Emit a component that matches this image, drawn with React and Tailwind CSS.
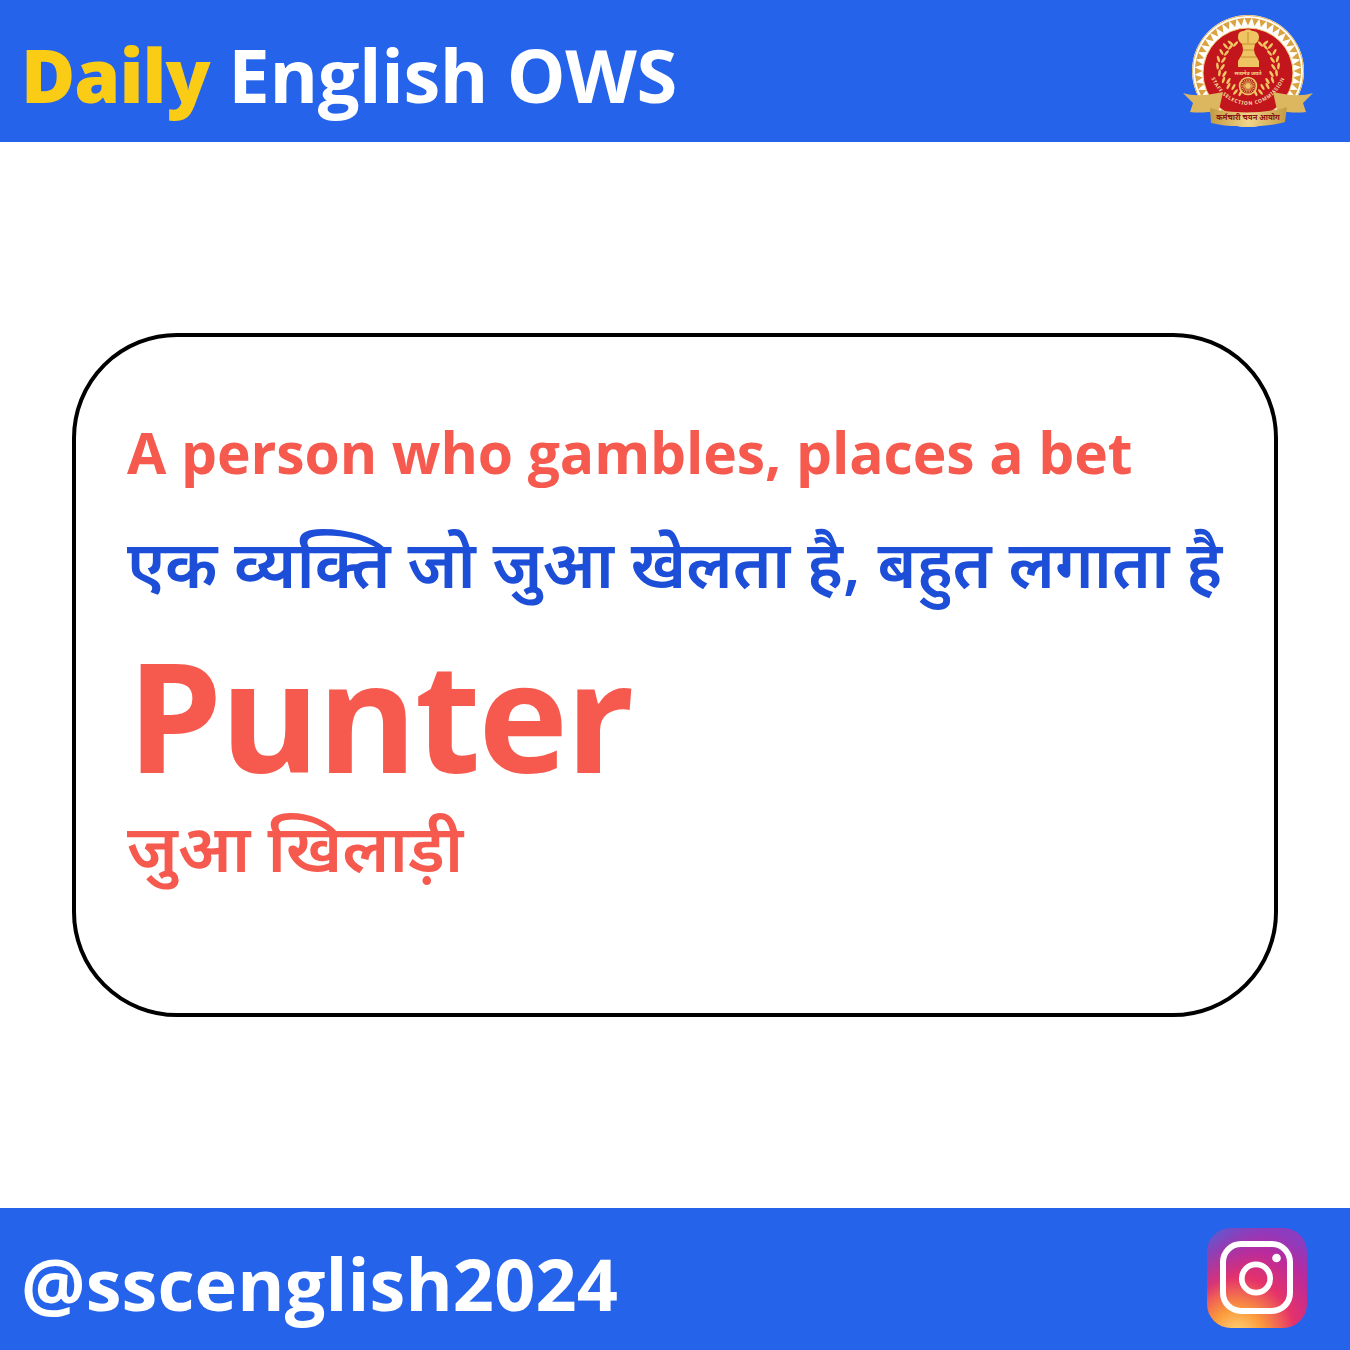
import React from 'react';

const rays = Array.from({ length: 44 }, (_, i) => (i * 360) / 44);
const leaves = [0, 1, 2, 3, 4, 5, 6, 7, 8];
// wreath spine, left side; the right side is mirrored round x=67
const spine = [[52, 30], [47, 33], [43, 39], [40, 46], [39, 53], [41, 60], [45, 67], [50, 73], [57, 79]];

const Wreath = () => (
    <g>
        {leaves.map((i) => {
            const [x, y] = spine[i];
            return (
                <g key={i}>
                    <ellipse cx={x - 2.5} cy={y} rx="1.3" ry="3.4" fill="#f0c765" transform={`rotate(${-50 + i * 11} ${x - 2.5} ${y})`} />
                    <ellipse cx={x + 2.5} cy={y + 1} rx="1.3" ry="3.4" fill="#f0c765" transform={`rotate(${42 - i * 2} ${x + 2.5} ${y + 1})`} />
                </g>
            );
        })}
    </g>
);

const SscLogo = () => (
    <svg width="134" height="116" viewBox="0 0 134 116">
        <defs>
            <linearGradient id="gold" x1="0" x2="1" y1="0" y2="0">
                <stop offset="0" stopColor="#c39a42" />
                <stop offset="0.5" stopColor="#f0d58a" />
                <stop offset="1" stopColor="#c39a42" />
            </linearGradient>
            <path id="arc" d="M 26 48 C 29 78, 50 92, 67 92 C 84 92, 105 78, 108 48" fill="none" />
        </defs>
        <circle cx="67" cy="58" r="56" fill="#fff" />
        <circle cx="67" cy="58" r="55.5" fill="none" stroke="#e2b55c" strokeWidth="1" />
        {rays.map((a) => (
            <path key={a} d="M 63.4 5 L 70.6 5 L 67 12.5 Z" fill="#d9a441" transform={`rotate(${a} 67 58)`} />
        ))}
        <circle cx="67" cy="60" r="45" fill="#c3161c" stroke="#f0d080" strokeWidth="1" />
        {/* national emblem */}
        <path d="M63 18 C65 16 69 16 71 18 C75 18 78 20 78 24 C78 28 76 29 74 31 L73 36 C73 39 74 41 75 43 L78 48 V54 H57 V48 L60 43 C61 41 62 39 62 36 L61 31 C59 29 57 28 57 24 C57 20 59 18 63 18 Z" fill="#efc462" />
        <path d="M61 31 H74 M62 37 H73 M60 44 H75 M67 19 V30" stroke="#c68f2e" strokeWidth="1" />
        <text x="67" y="62" textAnchor="middle" fontSize="5.2" fontWeight="700" fill="#f3d98a" fontFamily="'Noto Sans', sans-serif">सत्यमेव जयते</text>
        <Wreath />
        <g transform="matrix(-1 0 0 1 134 0)">
            <Wreath />
        </g>
        {/* ashoka chakra */}
        <circle cx="67" cy="73" r="8.5" fill="#a9151a" stroke="#f0c765" strokeWidth="1.6" />
        <circle cx="67" cy="73" r="2.4" fill="#f0c765" />
        {rays.filter((_, i) => i % 4 === 0).map((a) => (
            <path key={a} d="M67 65 V81" stroke="#f0c765" strokeWidth="0.7" transform={`rotate(${a} 67 73)`} />
        ))}
        <text fontSize="5" fontWeight="700" fill="#f6dfa0" letterSpacing="0.7" fontFamily="'Noto Sans', sans-serif">
            <textPath href="#arc" startOffset="50%" textAnchor="middle">STAFF SELECTION COMMISSION</textPath>
        </text>
        {/* ribbon */}
        <path d="M2 80 C14 84 28 82 42 79 L38 97 C26 100 16 100 9 99 L12 90 Z" fill="#dcb75f" />
        <path d="M132 80 C120 84 106 82 92 79 L96 97 C108 100 118 100 125 99 L122 90 Z" fill="#dcb75f" />
        <path d="M29 95 C50 101 84 101 106 94 L104 109 C84 115 50 115 30 110 Z" fill="url(#gold)" />
        <text x="67" y="107" textAnchor="middle" fontSize="7.6" fontWeight="700" fill="#8c1414" fontFamily="'Noto Sans', sans-serif">कर्मचारी चयन आयोग</text>
    </svg>
);

const InstagramLogo = () => (
    <svg width="100" height="100" viewBox="0 0 100 100">
        <defs>
            <radialGradient id="ig1" cx="0.3" cy="1.08" r="1.12">
                <stop offset="0" stopColor="#ffdc80" />
                <stop offset="0.24" stopColor="#fb9a3c" />
                <stop offset="0.52" stopColor="#e5326a" />
                <stop offset="0.8" stopColor="#b82a9e" />
                <stop offset="1" stopColor="#8d3bbf" />
            </radialGradient>
            <linearGradient id="ig2" x1="0.02" y1="0" x2="0.38" y2="0.42">
                <stop offset="0" stopColor="#4668da" stopOpacity="0.9" />
                <stop offset="1" stopColor="#a32fb0" stopOpacity="0" />
            </linearGradient>
        </defs>
        <rect width="100" height="100" rx="24" fill="url(#ig1)" />
        <rect width="100" height="100" rx="24" fill="url(#ig2)" />
        <rect x="16" y="16" width="67" height="67" rx="18" fill="none" stroke="#fff" strokeWidth="6" />
        <circle cx="49" cy="50.5" r="14.2" fill="none" stroke="#fff" strokeWidth="5.7" />
        <circle cx="69.5" cy="30" r="4.3" fill="#fff" />
    </svg>
);

const App = () => {
    return (
        <div className="w-[1350px] h-[1350px] flex flex-col bg-white font-['Open_Sans','Noto_Sans',sans-serif] font-bold">
            <header className="h-[142px] bg-[#2563eb] flex items-center justify-between pl-[21px] pr-[35px]">
                <h1 className="text-[74px] leading-none text-white pt-[8px] tracking-[-0.4px]">
                    <span className="text-[#facc15] font-extrabold tracking-[-1px]">Daily</span> English OWS
                </h1>
                <SscLogo />
            </header>

            <main className="flex-1 flex items-center justify-center">
                <div className="w-[1206px] h-[684px] border-4 border-black rounded-[105px] pl-[51px] pt-[83px]">
                    <p className="text-[57px] leading-[64px] tracking-[-0.1px] text-[#f65a4f]">A person who gambles, places a bet</p>
                    <p className="mt-[37px] text-[65px] leading-[84px] text-[#1d4ed8] font-semibold whitespace-nowrap">एक व्यक्ति जो जुआ खेलता है, बहुत लगाता है</p>
                    <p className="mt-[30px] text-[152px] leading-[160px] tracking-[-2.5px] text-[#f65a4f]">Punter</p>
                    <p className="mt-[9px] text-[66px] leading-[84px] text-[#f65a4f] font-semibold">जुआ खिलाड़ी</p>
                </div>
            </main>

            <footer className="h-[142px] bg-[#2563eb] flex items-center justify-between pl-[21px] pr-[43px]">
                <span className="text-[72px] leading-none text-white pt-[8px] tracking-[0.1px]">@sscenglish2024</span>
                <div className="-mt-[2px]">
                    <InstagramLogo />
                </div>
            </footer>
        </div>
    );
};

export default App;
